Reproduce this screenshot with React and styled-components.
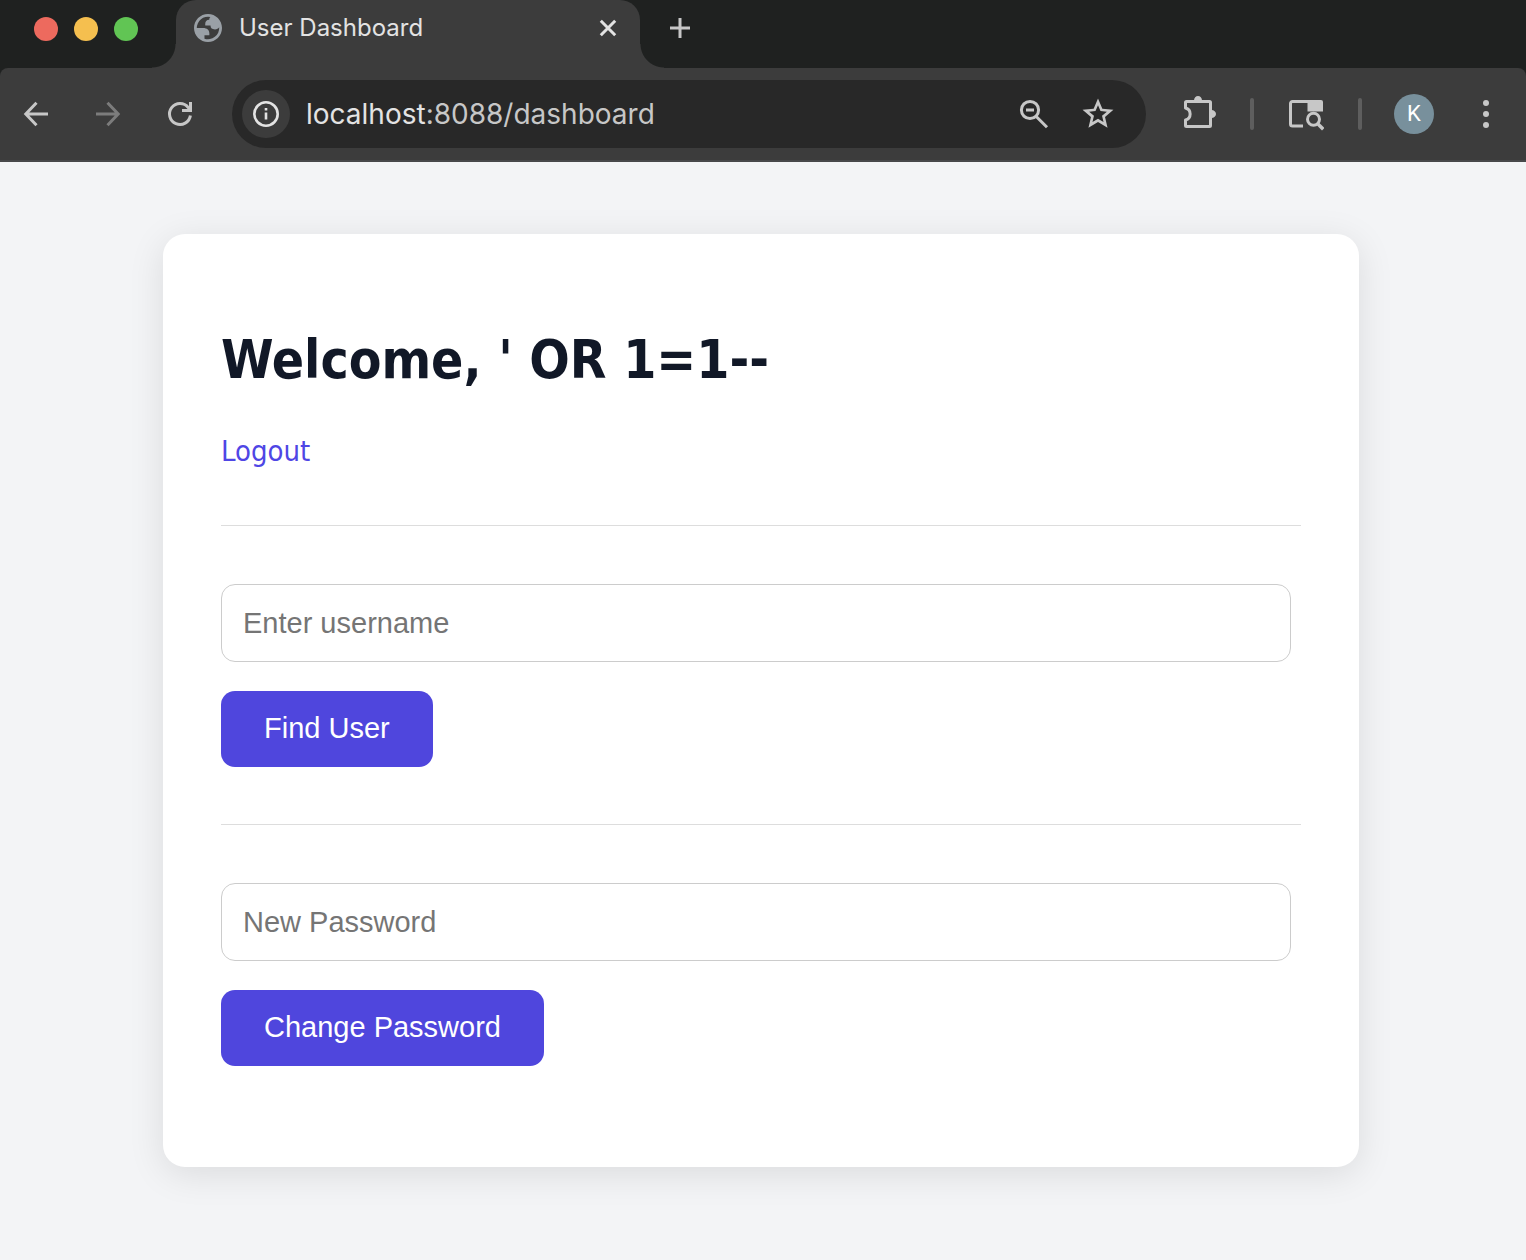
import React from "react";
import styled, { createGlobalStyle } from "styled-components";

const Global = createGlobalStyle`
  *, *::before, *::after { box-sizing: border-box; }
  body { margin: 0; background: #f3f4f6; }
`;

const TabStrip = styled.div`
  display: flex;
  align-items: stretch;
  height: 68px;
  background: #1f2120;
`;

const WindowControls = styled.div`
  display: flex;
  align-items: center;
  gap: 16px;
  padding: 0 14px 10px 34px;
`;

const Light = styled.button`
  width: 24px;
  height: 24px;
  padding: 0;
  border: 0;
  border-radius: 50%;
  background: ${(p) => p.$color};
`;

const Flare = styled.span`
  align-self: flex-end;
  width: 24px;
  height: 24px;
  background: radial-gradient(
    circle at ${(p) => (p.$side === "left" ? "0 0" : "100% 0")},
    transparent 23px,
    #3c3c3c 24px
  );
`;

const Tab = styled.div`
  display: flex;
  align-items: center;
  width: 464px;
  gap: 17px;
  padding: 0 16px 12px 18px;
  border-radius: 20px 20px 0 0;
  background: #3c3c3c;
`;

const TabTitle = styled.span`
  flex: 1;
  font: 400 24px/32px Inter, sans-serif;
  color: #e3e3e3;
`;

const IconButton = styled.button`
  display: flex;
  flex: none;
  align-items: center;
  justify-content: center;
  width: ${(p) => p.$size || 40}px;
  height: ${(p) => p.$size || 40}px;
  padding: 0;
  border: 0;
  border-radius: 50%;
  background: ${(p) => p.$fill || "transparent"};
  color: ${(p) => p.$color || "#c7c7c7"};
`;

const NewTab = styled.div`
  padding: 12px 0 0;
`;

const ToolbarBack = styled.div`
  background: #1f2120;
`;

const Toolbar = styled.div`
  display: flex;
  align-items: center;
  height: 94px;
  padding: 0 20px 0 16px;
  border-radius: 8px 8px 0 0;
  border-bottom: 2px solid #48484a;
  background: #3c3c3c;
`;

const NavButtons = styled.nav`
  display: flex;
  gap: 32px;
  margin-right: 32px;
`;

const Omnibox = styled.div`
  display: flex;
  flex: 1;
  align-items: center;
  gap: 16px;
  height: 68px;
  padding: 0 28px 0 10px;
  border-radius: 34px;
  background: #282828;
`;

const Address = styled.div`
  flex: 1;
  font: 400 28px/36px Inter, sans-serif;
  color: #c7c7c7;
`;

const Host = styled.span`
  color: #e3e3e3;
`;

const OmniActions = styled.div`
  display: flex;
  gap: 24px;
`;

const Actions = styled.div`
  display: flex;
  align-items: center;
  gap: 32px;
  margin-left: 32px;
`;

const Divider = styled.span`
  width: 4px;
  height: 32px;
  border-radius: 2px;
  background: #5e5e5e;
`;

const Avatar = styled.button`
  width: 40px;
  height: 40px;
  padding: 0;
  border: 0;
  border-radius: 50%;
  background: #78909c;
  color: #fff;
  font: 400 22px/40px Roboto, sans-serif;
`;

const Main = styled.main`
  padding: 72px 167px 93px 163px;
`;

const Card = styled.section`
  padding: 58px 58px 101px;
  border-radius: 22px;
  background: #fff;
  box-shadow: 0 7px 36px rgba(0, 0, 0, 0.1);
`;

const Title = styled.h1`
  margin: 34px 0 40px;
  font: 700 53px/68px "DejaVu Sans Condensed", "DejaVu Sans", sans-serif;
  color: #111827;
`;

const Logout = styled.a`
  display: block;
  width: fit-content;
  font: 400 29px/34px "DejaVu Sans Condensed", "DejaVu Sans", sans-serif;
  color: #4f46e5;
  text-decoration: none;
`;

const Rule = styled.hr`
  height: 1px;
  margin: 57px 0 58px;
  border: 0;
  background: #ddd;
`;

const Form = styled.form`
  display: flex;
  flex-direction: column;
  align-items: flex-start;
  gap: 29px;
`;

const Field = styled.input`
  box-sizing: content-box;
  width: 95%;
  height: 34px;
  padding: 21px;
  border: 1px solid #ccc;
  border-radius: 14px;
  background: #fff;
  font: 400 29px/34px "Liberation Sans", Arial, sans-serif;
  color: #111827;
  &::placeholder { color: #757575; opacity: 1; }
`;

const Submit = styled.button`
  height: 76px;
  padding: 0 43px 2px;
  border: 0;
  border-radius: 14px;
  background: #4f46dd;
  font: 400 29px/34px "Liberation Sans", Arial, sans-serif;
  color: #fff;
`;

const Globe = () => (
  <svg width="28" height="28" viewBox="2 2 20 20" aria-hidden="true">
    <path
      fill="#9aa0a6"
      fillRule="evenodd"
      d="M12 2C6.480 2 2 6.480 2 12s4.480 10 10 10 10-4.480 10-10S17.520 2 12 2zM4 12h4.400c3.407.022 4.922 1.730 4.543 5.127H9.488v2.470a8.004 8.004 0 0 0 10.498-8.083C19.327 12.504 18.332 13 17 13c-2.137 0-3.206-.916-3.206-2.750h-3.748c-.274-2.728.683-4.092 2.870-4.092 0-.975.327-1.597.811-1.970A8.004 8.004 0 0 0 4 12z"
    />
  </svg>
);

const Stroke = ({ size = 36, width = 3, children }) => (
  <svg
    width={size}
    height={size}
    viewBox={`0 0 ${size} ${size}`}
    fill="none"
    stroke="currentColor"
    strokeWidth={width}
    aria-hidden="true"
  >
    {children}
  </svg>
);

const BackIcon = () => (
  <Stroke><path d="M30 18H8M18.500 6.800L7.800 18l10.700 11.200" /></Stroke>
);
const ForwardIcon = () => (
  <Stroke><path d="M6 18h22M17.500 6.800L28.200 18 17.500 29.200" /></Stroke>
);
const ReloadIcon = () => (
  <Stroke>
    <path d="M28.400 19.500A10.500 10.500 0 1 1 26.300 11.600L28.500 14.500" />
    <path d="M28.500 6v8.500H20" />
  </Stroke>
);
const CloseIcon = () => (
  <Stroke size={24}><path d="M4.800 4.800l14.400 14.400M19.200 4.800L4.800 19.200" /></Stroke>
);
const PlusIcon = () => (
  <Stroke size={24}><path d="M12 2v20M2 12h20" /></Stroke>
);
const InfoIcon = () => (
  <Stroke size={28} width={2.6}>
    <circle cx="14" cy="14" r="11.700" />
    <path d="M14 12.500v7M14 8v2.600" />
  </Stroke>
);
const ZoomOutIcon = () => (
  <Stroke>
    <circle cx="14" cy="14" r="8.600" />
    <path d="M20 20.200L31 31.200M10 14h8" />
  </Stroke>
);
const StarIcon = () => (
  <svg width="36" height="36" viewBox="0 0 24 24" fill="currentColor" aria-hidden="true">
    <path d="M22.300 9.100l-7.400-.640L12 1.600 9.100 8.460 1.700 9.100l5.620 4.870L5.640 21.200 12 17.360l6.360 3.840-1.680-7.230zM12 15.200l-3.660 2.200.97-4.160-3.230-2.800 4.260-.370L12 6.140l1.660 3.930 4.260.37-3.230 2.800.97 4.160z" />
  </svg>
);
const PuzzleIcon = () => (
  <Stroke>
    <path strokeLinejoin="round" d="M6.500 5.500h23a1 1 0 0 1 1 1v23a1 1 0 0 1-1 1h-23a1 1 0 0 1-1-1V24a6.200 6.200 0 0 0 0-12V6.500a1 1 0 0 1 1-1z" />
    <path fill="currentColor" stroke="none" d="M14 4.500a4 4.500 0 0 1 8 0zM31.500 14v8a4.500 4 0 0 0 0-8z" />
  </Stroke>
);
const WindowSearchIcon = () => (
  <Stroke>
    <path strokeLinejoin="round" d="M15 30H4.500a2 2 0 0 1-2-2V7.500a2 2 0 0 1 2-2H33" />
    <path fill="currentColor" stroke="none" d="M19.500 4H33a2 2 0 0 1 2 2v9.500H19.500z" />
    <circle cx="25.500" cy="23.300" r="6" />
    <path strokeWidth="3.400" d="M29.500 27.500l5.700 5.700" />
  </Stroke>
);
const MenuIcon = () => (
  <svg width="36" height="36" viewBox="0 0 36 36" fill="currentColor" aria-hidden="true">
    <circle cx="18" cy="7" r="3" />
    <circle cx="18" cy="18" r="3" />
    <circle cx="18" cy="29" r="3" />
  </svg>
);

export default function App() {
  const stay = (e) => e.preventDefault();
  return (
    <>
      <Global />
      <header>
        <TabStrip>
          <WindowControls>
            <Light $color="#ed6a5e" aria-label="Close window" />
            <Light $color="#f5bf4f" aria-label="Minimize window" />
            <Light $color="#61c554" aria-label="Zoom window" />
          </WindowControls>
          <Flare $side="left" />
          <Tab>
            <Globe />
            <TabTitle>User Dashboard</TabTitle>
            <IconButton $size={32} $color="#e3e3e3" aria-label="Close tab"><CloseIcon /></IconButton>
          </Tab>
          <Flare $side="right" />
          <NewTab>
            <IconButton $size={32} aria-label="New tab"><PlusIcon /></IconButton>
          </NewTab>
        </TabStrip>
        <ToolbarBack>
          <Toolbar>
            <NavButtons>
              <IconButton aria-label="Back"><BackIcon /></IconButton>
              <IconButton aria-label="Forward" $color="#7c7c7c"><ForwardIcon /></IconButton>
              <IconButton aria-label="Reload"><ReloadIcon /></IconButton>
            </NavButtons>
            <Omnibox>
              <IconButton $size={48} $fill="#3c3c3c" $color="#e3e3e3" aria-label="Site information"><InfoIcon /></IconButton>
              <Address><Host>localhost</Host>:8088/dashboard</Address>
              <OmniActions>
                <IconButton aria-label="Zoom"><ZoomOutIcon /></IconButton>
                <IconButton aria-label="Bookmark"><StarIcon /></IconButton>
              </OmniActions>
            </Omnibox>
            <Actions>
              <IconButton aria-label="Extensions"><PuzzleIcon /></IconButton>
              <Divider />
              <IconButton aria-label="Search tabs"><WindowSearchIcon /></IconButton>
              <Divider />
              <Avatar>K</Avatar>
              <IconButton aria-label="Menu"><MenuIcon /></IconButton>
            </Actions>
          </Toolbar>
        </ToolbarBack>
      </header>
      <Main>
        <Card>
          <Title>Welcome, ' OR 1=1--</Title>
          <Logout href="#logout">Logout</Logout>
          <Rule />
          <Form onSubmit={stay}>
            <Field type="text" placeholder="Enter username" aria-label="Enter username" />
            <Submit type="submit">Find User</Submit>
          </Form>
          <Rule />
          <Form onSubmit={stay}>
            <Field type="password" placeholder="New Password" aria-label="New Password" />
            <Submit type="submit">Change Password</Submit>
          </Form>
        </Card>
      </Main>
    </>
  );
}
